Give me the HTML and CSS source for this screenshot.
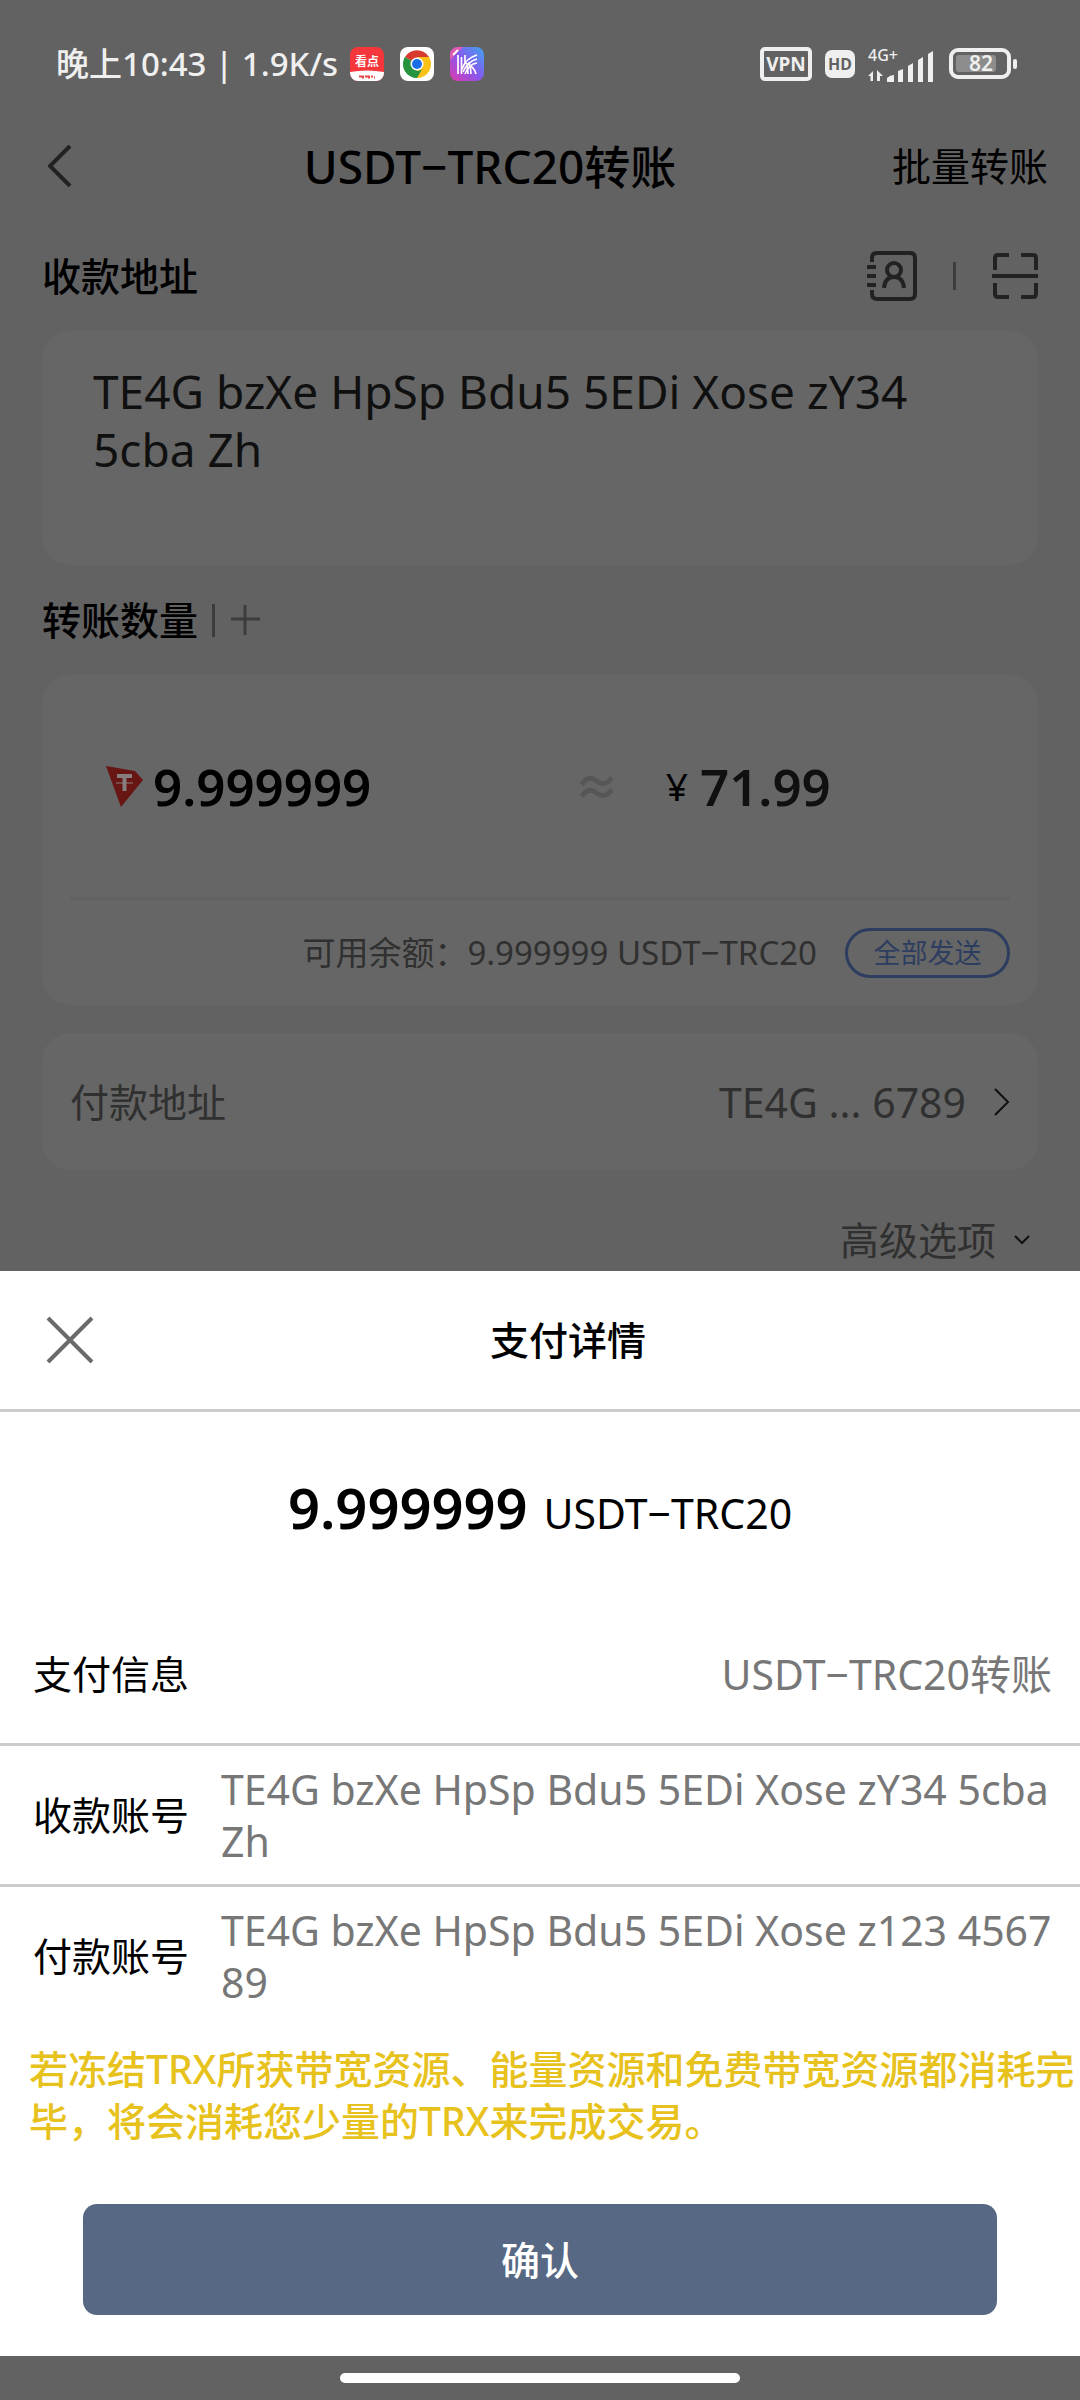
FILE: index.html
```html
<!DOCTYPE html>
<html lang="zh-CN">
<head>
  <meta charset="utf-8">
  <meta name="viewport" content="width=device-width, initial-scale=1">
  <title>USDT−TRC20转账</title>
  <link rel="stylesheet" href="styles.css">
</head>
<body>
  <div class="screen">
    <!-- Status Bar -->
    <div class="status-bar">
      <span class="status-time">晚上10:43 | 1.9K/s</span>
      <div class="status-apps">
        <svg width="34" height="34" viewBox="0 0 34 34">
          <rect width="34" height="34" rx="8" fill="#f5373c"/>
          <path d="M0 25 Q17 22 34 25 V26 a8 8 0 0 1 -8 8 H8 a8 8 0 0 1 -8 -8 Z" fill="#fff"/>
          <text x="17" y="19" class="app-name">看点</text>
          <path d="M9 29.500 h3 m1 -1 v3 m2 -2 h3 m1 -1 v3 m2 -2 h2 m1 1 h1" stroke="#e8474a" stroke-width="2" fill="none"/>
        </svg>
        <svg width="34" height="34" viewBox="0 0 34 34">
          <rect width="34" height="34" rx="8" fill="#fff"/>
          <path d="M17 17 L5 10 A14 14 0 0 1 29 10 Z" fill="#d93a2f"/>
          <path d="M17 17 L29 10 A14 14 0 0 1 17 31 Z" fill="#fbc116"/>
          <path d="M17 17 L17 31 A14 14 0 0 1 5 10 Z" fill="#26933f"/>
          <path d="M17 10 H29 A14 14 0 0 1 17 31 L23 20 Z" fill="#fbc116"/>
          <path d="M5 10 L11 20.500 A7 7 0 0 0 23 20.500 L17 31 A14 14 0 0 1 5 10 Z" fill="#26933f"/>
          <circle cx="17" cy="17" r="6.500" fill="#fff"/>
          <circle cx="17" cy="17" r="5" fill="#1b6fe6"/>
        </svg>
        <svg width="34" height="34" viewBox="0 0 34 34">
          <defs>
            <linearGradient id="appFill" x1="0" y1="1" x2="1" y2="0">
              <stop offset="0" stop-color="#e03aac"/>
              <stop offset="0.500" stop-color="#8657ee"/>
              <stop offset="1" stop-color="#3fa6f0"/>
            </linearGradient>
          </defs>
          <rect width="34" height="34" rx="8" fill="url(#appFill)"/>
          <path d="M0 13 V8 A8 8 0 0 1 8 0 H13 Z" fill="#e25bb0"/>
          <path d="M3 8 L8 3" stroke="#fff" stroke-width="2"/>
          <g fill="none" stroke="#fff" stroke-width="1.700">
            <path d="M8 8 V27 M11.500 10 V27 M15 8 V16"/>
            <path d="M27 8 Q16 11 12 22 M27 12 Q18 14 13 25 M27 16 Q19 17 15 27"/>
            <path d="M15 16 Q24 19 26 27 M19 15 Q21 22 21 27 M17 19 Q18 24 18 27"/>
          </g>
        </svg>
      </div>
      <div class="status-signals">
        <span class="vpn">VPN</span>
        <span class="hd">HD</span>
        <svg width="68" height="38" viewBox="0 -4 68 38" fill="#efefef">
          <text x="0" y="12" class="network">4G+</text>
          <path d="M0 27 L5 22 V32 H2.500 V27 Z M9 21 L15 27 H12 V32 H9 Z"/>
          <path d="M19 33 V29 Q22 26 26 26 V33 Z M30 33 V22 L35 20 V33 Z M40 33 V17 L45 14 V33 Z M50 33 V11 L55 8 V33 Z M60 33 V5 L65 2 V33 Z"/>
        </svg>
        <svg width="68" height="32" viewBox="0 0 68 32">
          <rect x="2" y="2" width="58" height="27" rx="7" fill="none" stroke="#efefef" stroke-width="4"/>
          <rect x="7" y="7" width="40" height="17" rx="3" fill="#8c8c8c"/>
          <rect x="64" y="11" width="4" height="10" rx="2" fill="#efefef"/>
          <text x="32" y="23" class="battery">82</text>
        </svg>
      </div>
    </div>

    <!-- Transfer Page -->
    <div class="page">
      <header class="page-header">
        <button type="button" class="icon-button back" aria-label="返回">
          <svg width="24" height="42" viewBox="0 0 24 42"><path d="M22 1 L2 21 L22 41"/></svg>
        </button>
        <h1>USDT−TRC20转账</h1>
        <a href="#">批量转账</a>
      </header>

      <div class="section-head">
        <label for="address">收款地址</label>
        <div class="section-tools">
          <button type="button" class="icon-button" aria-label="地址簿">
            <svg width="50" height="50" viewBox="0 0 50 50">
              <path d="M5 11 V7 Q5 2 10 2 H43 Q48 2 48 7 V43 Q48 48 43 48 H10 Q5 48 5 43 V39 M0 16 H9 M0 25 H9 M0 34 H9"/>
              <circle cx="27" cy="19" r="7"/>
              <path d="M17 37 Q18 26 27 26 Q36 26 37 37"/>
            </svg>
          </button>
          <span class="bar"></span>
          <button type="button" class="icon-button" aria-label="扫一扫">
            <svg width="46" height="46" viewBox="0 0 46 46">
              <path d="M3 17 V5 Q3 2 6 2 H17 M29 2 H41 Q44 2 44 5 V17 M44 30 V41 Q44 44 41 44 H29 M17 44 H6 Q3 44 3 41 V30 M0 23 H46"/>
            </svg>
          </button>
        </div>
      </div>
      <div class="card">
        <textarea id="address" spellcheck="false">TE4G bzXe HpSp Bdu5 5EDi Xose zY34 5cba Zh</textarea>
      </div>

      <div class="section-head">
        <label for="amount">转账数量</label>
        <span class="bar tall"></span>
        <button type="button" class="icon-button plus" aria-label="添加">
          <svg width="30" height="30" viewBox="0 0 30 30"><path d="M0 14 H29 M14 0 V30"/></svg>
        </button>
      </div>
      <div class="card">
        <div class="amount-row">
          <svg width="37" height="41" viewBox="0 0 37 41">
            <path d="M0 0 L29 5 L37 14 L15 41 Z" fill="#681613"/>
            <path d="M11 10 H26 M18.500 10 V25" stroke="#867e7e" stroke-width="4"/>
            <path d="M10 17 H27" stroke="#867e7e" stroke-width="1"/>
          </svg>
          <input type="text" id="amount" value="9.999999">
          <span class="approx">≈</span>
          <label for="fiat">¥</label>
          <input type="text" id="fiat" value="71.99">
        </div>
        <div class="balance-row">
          <span>可用余额：9.999999 USDT−TRC20</span>
          <button type="button">全部发送</button>
        </div>
      </div>

      <div class="card payer">
        <span>付款地址</span>
        <span class="payer-address">TE4G ... 6789</span>
        <svg width="16" height="28" viewBox="0 0 16 28"><path d="M1 1 L14 14 L1 27"/></svg>
      </div>

      <div class="advanced">
        <span>高级选项</span>
        <svg width="16" height="10" viewBox="0 0 16 10"><path d="M1 1 L8 8 L15 1"/></svg>
      </div>
    </div>

    <!-- Payment Details -->
    <section class="sheet">
      <div class="sheet-header">
        <button type="button" class="icon-button close" aria-label="关闭">
          <svg width="48" height="48" viewBox="0 0 48 48"><path d="M2 2 L46 46 M46 2 L2 46"/></svg>
        </button>
        <h2>支付详情</h2>
      </div>
      <div class="total"><strong>9.999999</strong><span>USDT−TRC20</span></div>
      <dl>
        <div class="detail">
          <dt>支付信息</dt>
          <dd class="right">USDT−TRC20转账</dd>
        </div>
        <div class="detail">
          <dt>收款账号</dt>
          <dd>TE4G bzXe HpSp Bdu5 5EDi Xose zY34 5cba Zh</dd>
        </div>
        <div class="detail">
          <dt>付款账号</dt>
          <dd>TE4G bzXe HpSp Bdu5 5EDi Xose z123 4567 89</dd>
        </div>
      </dl>
      <p class="notice">若冻结TRX所获带宽资源、能量资源和免费带宽资源都消耗完毕，将会消耗您少量的TRX来完成交易。</p>
      <button type="button" class="confirm">确认</button>
    </section>

    <div class="nav-bar"><span></span></div>
  </div>
</body>
</html>
```
FILE: styles.css
```css
* {
  box-sizing: border-box;
}
body {
  margin: 0;
  background-color: #626262;
  color: #000;
  font-family: "Noto Sans", "Noto Sans CJK SC", sans-serif;
  font-size: 39px;
  line-height: 52px;
}
h1, h2, dl, dd, p {
  margin: 0;
}
svg {
  display: block;
  flex: none;
}
a {
  color: inherit;
  text-decoration: none;
}
button, input, textarea {
  border: none;
  padding: 0;
  background: none;
  color: inherit;
  font: inherit;
}
.screen {
  display: flex;
  flex-direction: column;
  min-height: 100vh;
}

/* status bar */
.status-bar {
  display: flex;
  align-items: center;
  height: 122px;
  padding: 6px 63px 0 56px;
  color: #efefef;
}
.status-time {
  font-size: 33px;
  font-weight: 500;
  white-space: nowrap;
}
.status-apps {
  display: flex;
  gap: 16px;
  margin-left: 12px;
}
.app-name {
  fill: #fff;
  font-size: 12px;
  font-weight: 700;
  text-anchor: middle;
}
.status-signals {
  display: flex;
  align-items: center;
  gap: 13px;
  margin-left: auto;
}
.vpn {
  width: 52px;
  border: 4px solid #efefef;
  border-radius: 5px;
  font-size: 19px;
  font-weight: 700;
  line-height: 26px;
  text-align: center;
}
.hd {
  width: 30px;
  border-radius: 7px;
  background-color: #efefef;
  color: #626262;
  font-size: 16px;
  font-weight: 700;
  line-height: 28px;
  text-align: center;
}
.network {
  font-size: 16px;
  font-weight: 500;
}
.battery {
  fill: #efefef;
  font-size: 21px;
  font-weight: 600;
  text-anchor: middle;
}

/* transfer page */
.page {
  flex: 1;
}
.icon-button {
  flex: none;
}
.icon-button svg {
  fill: none;
  stroke: #222;
  stroke-width: 4;
}
.page-header {
  display: flex;
  align-items: center;
  height: 88px;
  margin-bottom: 11px;
  padding: 0 32px 0 48px;
}
.page-header h1 {
  flex: 1;
  font-size: 46px;
  font-weight: 500;
  text-align: center;
}
.back {
  width: 40px;
}
.section-head {
  display: flex;
  align-items: center;
  height: 110px;
  padding: 0 42px;
  font-weight: 500;
}
.section-tools {
  display: flex;
  align-items: center;
  gap: 36px;
  margin-left: auto;
}
.bar {
  width: 3px;
  height: 28px;
  background-color: #3c3c3c;
}
.bar.tall {
  height: 33px;
  margin: 0 16px 0 14px;
}
.plus svg {
  stroke: #3c3c3c;
  stroke-width: 3;
}
.card {
  margin: 0 42px 28px;
  border-radius: 28px;
  background-color: #666;
}
.card:has(textarea) {
  margin-bottom: 0;
}
textarea {
  display: block;
  width: 100%;
  height: 234px;
  padding: 31px 51px;
  color: #101010;
  font-size: 46px;
  line-height: 58px;
  resize: none;
  outline: none;
}
.amount-row {
  display: flex;
  align-items: center;
  height: 225px;
  margin: 0 28px;
  padding-left: 36px;
  border-bottom: 3px solid #616161;
}
.amount-row input {
  min-width: 0;
  font-size: 51px;
  font-weight: 600;
  line-height: 60px;
}
#amount {
  flex: 1;
  margin-left: 10px;
}
.approx {
  margin-right: 46px;
  color: #565656;
  font-size: 46px;
  font-weight: 700;
}
#fiat {
  width: 310px;
  margin-left: 12px;
  color: #101010;
}
.balance-row {
  display: flex;
  align-items: center;
  justify-content: flex-end;
  gap: 28px;
  height: 105px;
  padding: 0 28px;
  color: #303030;
  font-size: 33px;
}
.balance-row button {
  width: 165px;
  height: 50px;
  border: 3px solid #2d3d60;
  border-radius: 25px;
  color: #2d3d60;
  font-size: 27px;
  line-height: 40px;
}
.payer {
  display: flex;
  align-items: center;
  height: 137px;
  margin-bottom: 0;
  padding: 0 28px;
  color: #303030;
}
.payer-address {
  margin: 0 28px 0 auto;
  font-size: 41px;
}
.payer svg, .advanced svg {
  fill: none;
  stroke: #111;
  stroke-width: 2;
}
.advanced {
  display: flex;
  align-items: center;
  justify-content: flex-end;
  gap: 18px;
  padding: 44px 50px 0 0;
  color: #303030;
}

/* payment details */
.sheet {
  padding-bottom: 41px;
  background-color: #fff;
}
.sheet-header {
  display: flex;
  align-items: center;
  height: 141px;
  padding: 0 40px 0 46px;
  border-bottom: 3px solid #ccc;
}
.close {
  width: 50px;
}
.close svg {
  stroke: #6a6a6a;
}
.sheet-header h2 {
  flex: 1;
  font-size: 39px;
  font-weight: 500;
  text-align: center;
}
.total {
  display: flex;
  align-items: baseline;
  justify-content: center;
  gap: 16px;
  height: 193px;
  padding-top: 57px;
  font-size: 41px;
}
.total strong {
  font-size: 56px;
  font-weight: 600;
  line-height: 76px;
}
.detail {
  display: flex;
  align-items: center;
  gap: 32px;
  height: 141px;
  padding: 0 28px 0 33px;
  border-bottom: 3px solid #ccc;
}
.detail:last-child {
  height: 138px;
  border-bottom: none;
}
.detail dt {
  flex: none;
}
.detail dd {
  flex: 1;
  color: #777;
  font-size: 41px;
}
.detail dd.right {
  text-align: right;
}
.notice {
  padding: 18px 4px 0 29px;
  color: #e8c21c;
  font-weight: 500;
}
.confirm {
  display: block;
  width: calc(100% - 166px);
  height: 111px;
  margin: 57px auto 0;
  border-radius: 14px;
  background-color: #576884;
  color: #fff;
  font-weight: 500;
}

/* bottom gesture bar */
.nav-bar {
  display: flex;
  align-items: center;
  justify-content: center;
  height: 44px;
}
.nav-bar span {
  width: 37%;
  height: 10px;
  border-radius: 5px;
  background-color: #fff;
}
```
